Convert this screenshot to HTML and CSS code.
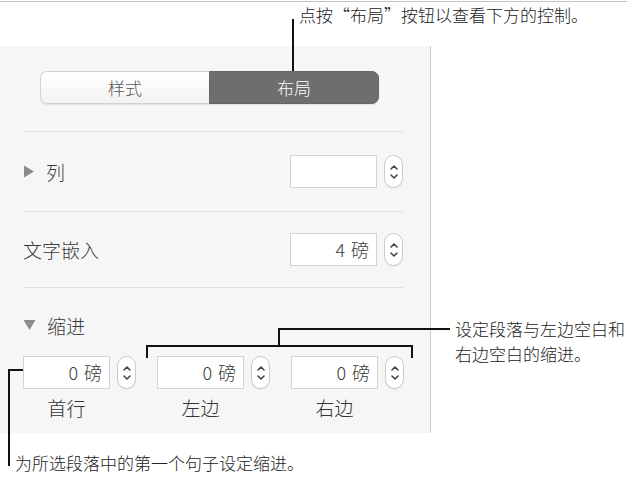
FILE: index.html
```html
<!DOCTYPE html>
<html lang="zh-CN">
<head>
<meta charset="utf-8">
<link rel="stylesheet" href="styles.css">
</head>
<body>
<div class="page">
  <div class="topline"></div>
  <div class="panel">
    <div class="seg">
      <div class="seg-item">样式</div>
      <div class="seg-item seg-on">布局</div>
    </div>
    <div class="sep"></div>
    <div class="row row-a">
      <div class="label"><svg class="tri" width="12" height="13" viewBox="0 0 12 13"><path d="M1 0.5 L11 6.5 L1 12.5 Z" fill="#8c8c8c"/></svg>列</div>
      <div class="ctl">
        <div class="box"></div>
        <div class="step"><svg width="12" height="24" viewBox="0 0 12 24"><path d="M3 9 L6 6 L9 9" fill="none" stroke="#444" stroke-width="1.6" stroke-linecap="round" stroke-linejoin="round"/><path d="M3 15 L6 18 L9 15" fill="none" stroke="#444" stroke-width="1.6" stroke-linecap="round" stroke-linejoin="round"/></svg></div>
      </div>
    </div>
    <div class="sep"></div>
    <div class="row row-b">
      <div class="label plain">文字嵌入</div>
      <div class="ctl">
        <div class="box">4 磅</div>
        <div class="step"><svg width="12" height="24" viewBox="0 0 12 24"><path d="M3 9 L6 6 L9 9" fill="none" stroke="#444" stroke-width="1.6" stroke-linecap="round" stroke-linejoin="round"/><path d="M3 15 L6 18 L9 15" fill="none" stroke="#444" stroke-width="1.6" stroke-linecap="round" stroke-linejoin="round"/></svg></div>
      </div>
    </div>
    <div class="sep"></div>
    <div class="indent-head"><svg class="tri" width="13" height="12" viewBox="0 0 13 12"><path d="M0.5 1 L12.5 1 L6.5 11 Z" fill="#8c8c8c"/></svg>缩进</div>
    <div class="fields">
      <div class="field">
        <div class="ctl">
          <div class="box">0 磅</div>
          <div class="step"><svg width="12" height="24" viewBox="0 0 12 24"><path d="M3 9 L6 6 L9 9" fill="none" stroke="#444" stroke-width="1.6" stroke-linecap="round" stroke-linejoin="round"/><path d="M3 15 L6 18 L9 15" fill="none" stroke="#444" stroke-width="1.6" stroke-linecap="round" stroke-linejoin="round"/></svg></div>
        </div>
        <div class="cap">首行</div>
      </div>
      <div class="field">
        <div class="ctl">
          <div class="box">0 磅</div>
          <div class="step"><svg width="12" height="24" viewBox="0 0 12 24"><path d="M3 9 L6 6 L9 9" fill="none" stroke="#444" stroke-width="1.6" stroke-linecap="round" stroke-linejoin="round"/><path d="M3 15 L6 18 L9 15" fill="none" stroke="#444" stroke-width="1.6" stroke-linecap="round" stroke-linejoin="round"/></svg></div>
        </div>
        <div class="cap">左边</div>
      </div>
      <div class="field">
        <div class="ctl">
          <div class="box">0 磅</div>
          <div class="step"><svg width="12" height="24" viewBox="0 0 12 24"><path d="M3 9 L6 6 L9 9" fill="none" stroke="#444" stroke-width="1.6" stroke-linecap="round" stroke-linejoin="round"/><path d="M3 15 L6 18 L9 15" fill="none" stroke="#444" stroke-width="1.6" stroke-linecap="round" stroke-linejoin="round"/></svg></div>
        </div>
        <div class="cap">右边</div>
      </div>
    </div>
  </div>

  <!-- callouts -->
  <div class="ln ln-top"></div>
  <div class="note note-top">点按<span class="q">“</span>布局<span class="q">”</span>按钮以查看下方的控制。</div>

  <div class="ln br-h"></div>
  <div class="ln br-l"></div>
  <div class="ln br-r"></div>
  <div class="ln br-c"></div>
  <div class="ln br-out"></div>
  <div class="note note-right">设定段落与左边空白和<br>右边空白的缩进。</div>

  <div class="ln lf-h"></div>
  <div class="ln lf-v"></div>
  <div class="note note-bottom">为所选段落中的第一个句子设定缩进。</div>
</div>
</body>
</html>
```
FILE: styles.css
```css
* { box-sizing: border-box; }
html, body { margin: 0; padding: 0; background: #fff; }
body {
  font-family: "Noto Sans CJK SC", "Noto Sans", sans-serif;
  font-weight: 300;
  color: #333;
}
.page {
  position: relative;
  width: 627px;
  height: 478px;
  overflow: hidden;
}
.topline {
  height: 1px;
  margin-top: 1px;
  background: #c2c2c2;
}
.panel {
  margin-top: 44px;
  width: 431px;
  height: 387px;
  background: #f6f6f6;
  border-right: 1px solid #cccccc;
  padding: 25px 27px 0 23px;
}
.seg {
  display: flex;
  margin-left: 17px;
  width: 339px;
  height: 33px;
  border-radius: 7px;
  box-shadow: 0 1px 1px rgba(0,0,0,0.08);
}
.seg-item {
  flex: 0 0 169px;
  display: flex;
  align-items: center;
  justify-content: center;
  font-size: 17px;
  color: #555;
  background: linear-gradient(#ffffff, #f3f3f3);
  border: 1px solid #d2d2d2;
  border-right: none;
  border-radius: 7px 0 0 7px;
}
.seg-item.seg-on {
  flex: 0 0 170px;
  background: #6e6e6e;
  border: 1px solid #666;
  color: #fff;
  border-radius: 0 7px 7px 0;
}
.sep {
  height: 1px;
  background: #dedede;
}
.seg + .sep { margin-top: 27px; }
.row {
  display: flex;
  align-items: center;
  justify-content: space-between;
}
.row-a { height: 79px; }
.row-b { height: 75px; }
.label {
  display: flex;
  align-items: center;
  font-size: 19px;
  color: #3a3a3a;
}
.tri { margin-right: 11px; }
.ctl {
  display: flex;
  align-items: center;
  gap: 7px;
}
.box {
  width: 87px;
  height: 33px;
  background: #fff;
  border: 1px solid #d3d3d3;
  font-size: 18px;
  color: #3a3a3a;
  text-align: right;
  padding-right: 7px;
  line-height: 31px;
  word-spacing: 2px;
}
.step {
  width: 19px;
  height: 33px;
  background: #fff;
  border: 1px solid #cacaca;
  border-radius: 10px;
  display: flex;
  align-items: center;
  justify-content: center;
  box-shadow: 0 1px 1px rgba(0,0,0,0.06);
}
.indent-head {
  display: flex;
  align-items: center;
  height: 26px;
  margin-top: 24px;
  font-size: 19px;
  color: #3a3a3a;
}
.fields {
  display: flex;
  gap: 21px;
  margin-top: 18px;
}
.field {
  display: flex;
  flex-direction: column;
}
.cap {
  width: 87px;
  text-align: center;
  font-size: 19px;
  line-height: 24px;
  margin-top: 7px;
  color: #333;
}

/* callouts */
.ln { position: absolute; background: #111; }
.note {
  position: absolute;
  font-size: 17px;
  line-height: 25px;
  color: #222;
  white-space: nowrap;
}
.q {
  display: inline-block;
  width: 17px;
  text-align: center;
}
.ln-top { left: 292px; top: 19px; width: 2px; height: 52px; }
.note-top { left: 299px; top: 2px; }

.br-h { left: 146px; top: 345px; width: 267px; height: 2px; }
.br-l { left: 146px; top: 345px; width: 2px; height: 13px; }
.br-r { left: 411px; top: 345px; width: 2px; height: 13px; }
.br-c { left: 278px; top: 328px; width: 2px; height: 18px; }
.br-out { left: 278px; top: 328px; width: 172px; height: 2px; }
.note-right { left: 455px; top: 316px; }

.lf-h { left: 8px; top: 369px; width: 15px; height: 2px; }
.lf-v { left: 8px; top: 369px; width: 2px; height: 97px; }
.note-bottom { left: 15px; top: 450px; }
```
